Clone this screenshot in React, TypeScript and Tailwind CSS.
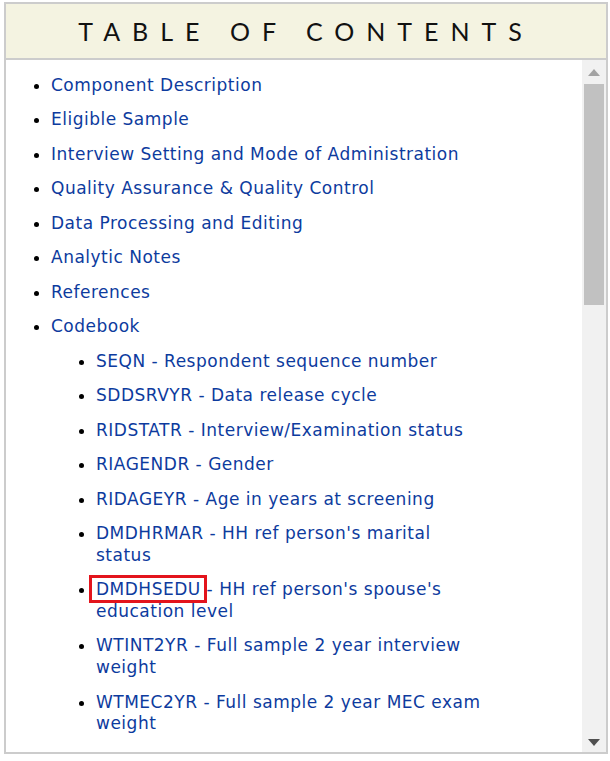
import React from "react";

const top = [
  "Component Description",
  "Eligible Sample",
  "Interview Setting and Mode of Administration",
  "Quality Assurance & Quality Control",
  "Data Processing and Editing",
  "Analytic Notes",
  "References",
];

const sub: [string, string][] = [
  ["SEQN", "Respondent sequence number"],
  ["SDDSRVYR", "Data release cycle"],
  ["RIDSTATR", "Interview/Examination status"],
  ["RIAGENDR", "Gender"],
  ["RIDAGEYR", "Age in years at screening"],
  ["DMDHRMAR", "HH ref person's marital status"],
  ["DMDHSEDU", "HH ref person's spouse's education level"],
  ["WTINT2YR", "Full sample 2 year interview weight"],
  ["WTMEC2YR", "Full sample 2 year MEC exam weight"],
];

export default function App() {
  return (
    <div className="w-[610px] h-[761px] bg-white pt-[2px] pl-[4px]">
      <div className="w-[604px] h-[752px] border-2 border-[#cccccc] flex flex-col">
        <div className="h-[56px] shrink-0 bg-[#f4f3e1] border-b-2 border-[#cccccc] flex items-center justify-center">
          <h1
            className="text-[25px] text-[#111] tracking-[12px] leading-none"
            style={{ fontFamily: "Lato, 'Open Sans', sans-serif" }}
          >
            TABLE OF CONTENTS
          </h1>
        </div>
        <div className="flex-1 flex overflow-hidden">
          <div
            className="flex-1 overflow-hidden pt-[15px] text-[17px] tracking-[0.5px] leading-[21.6px] text-[#0d3b9e]"
            style={{ fontFamily: "'DejaVu Sans', Verdana, sans-serif" }}
          >
            <ul className="list-disc pl-[45px] w-[480px] marker:text-black">
              {top.map((t) => (
                <li key={t} className="mb-[12.9px]">
                  <a>{t}</a>
                </li>
              ))}
              <li className="mb-[12.9px]">
                <a>Codebook</a>
                <ul className="list-disc pl-[45px] mt-[12.9px]">
                  {sub.map(([code, desc]) => (
                    <li key={code} className="mb-[12.9px]">
                      {code === "DMDHSEDU" ? (
                        <span className="relative">
                          <a>{code}</a>
                          <span className="absolute left-[-7px] right-[-6px] top-[-4px] bottom-[-4px] border-[3px] border-[#e3141c]" />
                        </span>
                      ) : (
                        <a>{code}</a>
                      )}{" "}
                      - {desc}
                    </li>
                  ))}
                </ul>
              </li>
            </ul>
          </div>
          <div className="w-[24px] shrink-0 bg-[#f1f1f1] flex flex-col items-center">
            <div className="h-[24px] w-full flex items-center justify-center">
              <svg width="12" height="7" viewBox="0 0 12 7">
                <polygon points="6,0 12,7 0,7" fill="#a3a3a3" />
              </svg>
            </div>
            <div className="w-[20px] h-[221px] bg-[#c1c1c1]" />
            <div className="flex-1" />
            <div className="h-[20px] w-full flex items-center justify-center">
              <svg width="12" height="7" viewBox="0 0 12 7">
                <polygon points="0,0 12,0 6,7" fill="#505050" />
              </svg>
            </div>
          </div>
        </div>
      </div>
    </div>
  );
}
